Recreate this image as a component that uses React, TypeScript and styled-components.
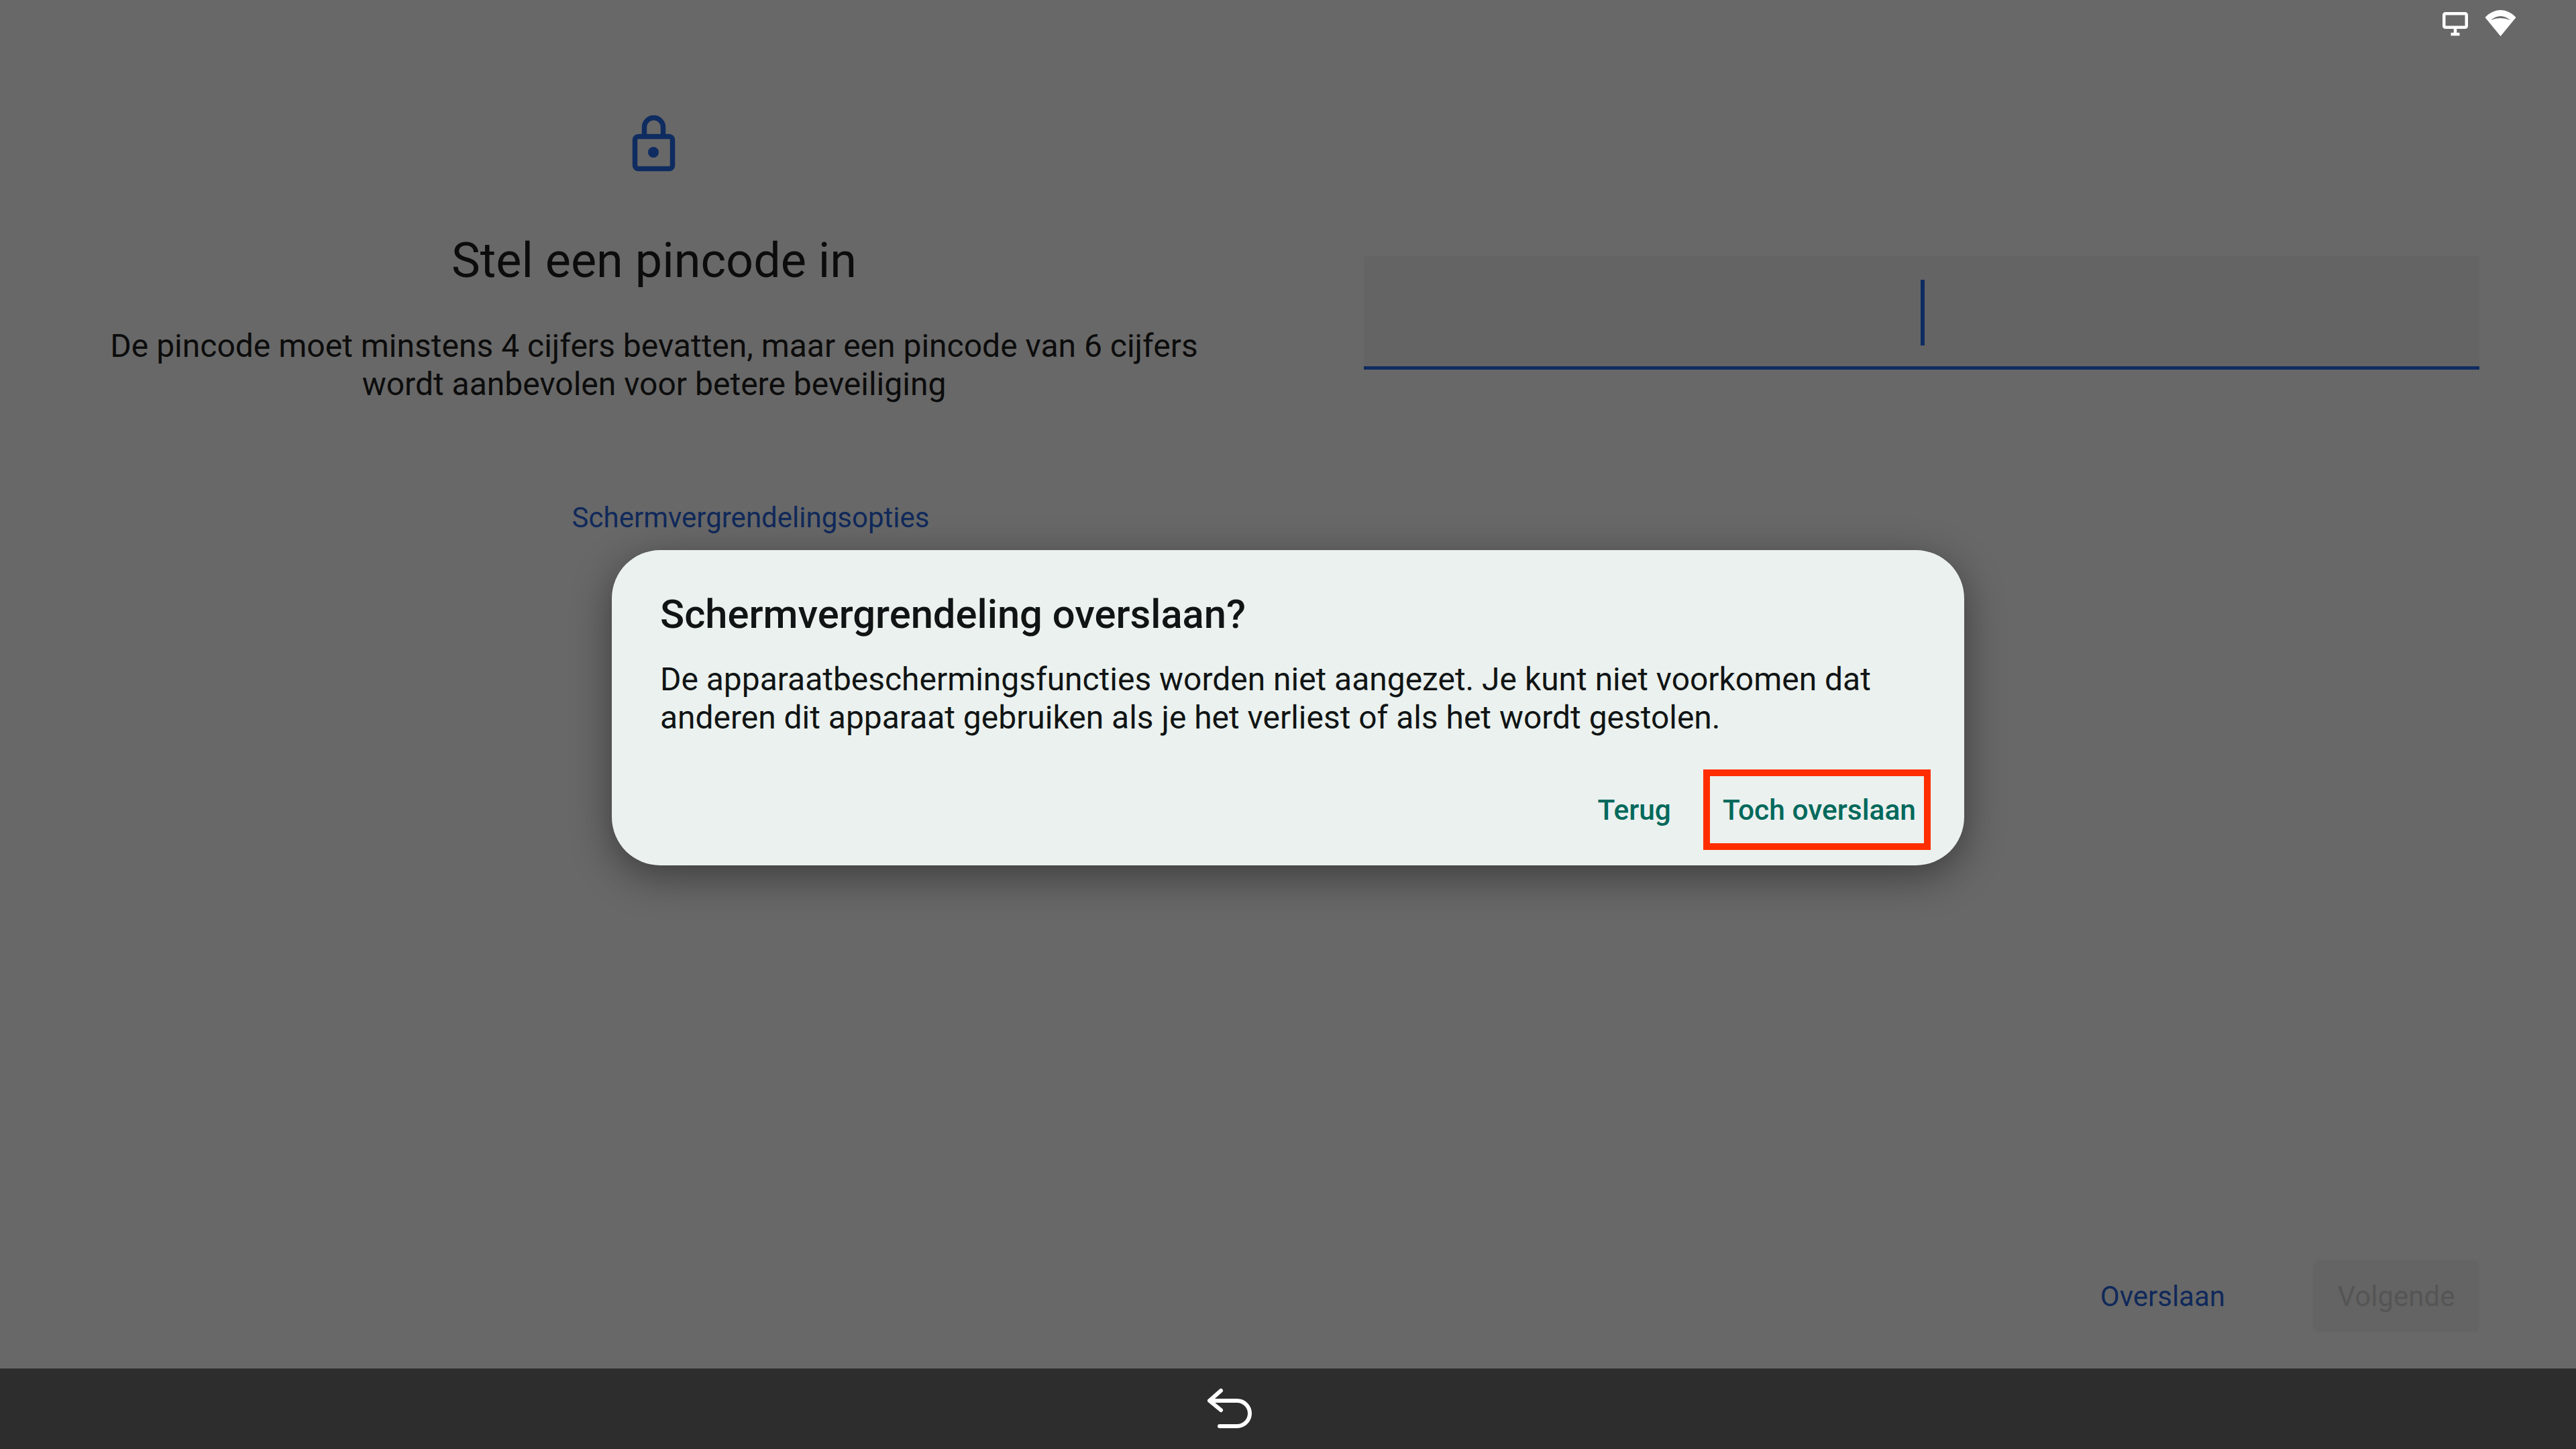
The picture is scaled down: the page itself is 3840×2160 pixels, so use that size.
import { createGlobalStyle, styled } from "styled-components";

const GlobalStyle = createGlobalStyle`
    html, body {
        margin: 0;
        padding: 0;
        background: #686868;
    }
    * {
        box-sizing: border-box;
    }
`;

export default function App() {
    return (
        <>
            <GlobalStyle />
            <Screen>
                <Main>
                    <StatusBar>
                        <svg width="42" height="40" viewBox="0 0 42 40" fill="none">
                            <rect x="4.250" y="5.250" width="33.500" height="20.500" rx="2" stroke="#fff" strokeWidth="4.500" />
                            <path d="M21 28v6M14.500 36h13" stroke="#fff" strokeWidth="4.500" />
                        </svg>
                        <svg width="47" height="40" viewBox="0 0 47 40">
                            <path d="M23.500 39 .5 11C7 4 15 0 23.500 0S40 4 46.500 11Z" fill="#fff" />
                            <path d="M9 15Q23.500 3 38 15 23.500 9 9 15Z" fill="#686868" />
                        </svg>
                    </StatusBar>
                    <Columns>
                        <LeftPane>
                            <LockIcon width="72" height="90" viewBox="0 0 72 90" fill="none">
                                <rect x="6.500" y="33.500" width="56" height="48" rx="5" stroke="#0f2c60" strokeWidth="7.500" />
                                <path d="M20.500 33V19.500a14 14 0 0 1 28 0V33" stroke="#0f2c60" strokeWidth="7.500" />
                                <circle cx="34" cy="57" r="8" fill="#0f2c60" />
                            </LockIcon>
                            <Title>Stel een pincode in</Title>
                            <Description>
                                De pincode moet minstens 4 cijfers bevatten, maar een pincode van 6 cijfers
                                <br />
                                wordt aanbevolen voor betere beveiliging
                            </Description>
                            <OptionsLink>Schermvergrendelingsopties</OptionsLink>
                        </LeftPane>
                        <RightPane>
                            <PinField>
                                <Caret />
                            </PinField>
                        </RightPane>
                    </Columns>
                    <Footer>
                        <SkipButton>Overslaan</SkipButton>
                        <NextButton>Volgende</NextButton>
                    </Footer>
                </Main>
                <NavBar>
                    <svg width="76" height="66" viewBox="0 0 76 66" fill="none">
                        <path
                            d="M24 5 7 20 24 34M7 20H48a19 19 0 0 1 0 38H22"
                            stroke="#fff"
                            strokeWidth="6"
                            strokeLinecap="round"
                            strokeLinejoin="round"
                        />
                    </svg>
                </NavBar>
                <Dialog>
                    <DialogTitle>Schermvergrendeling overslaan?</DialogTitle>
                    <DialogText>
                        De apparaatbeschermingsfuncties worden niet aangezet. Je kunt niet voorkomen dat
                        <br />
                        anderen dit apparaat gebruiken als je het verliest of als het wordt gestolen.
                    </DialogText>
                    <DialogActions>
                        <DialogButton>Terug</DialogButton>
                        <DialogButton $highlight>Toch overslaan</DialogButton>
                    </DialogActions>
                </Dialog>
            </Screen>
        </>
    );
}

const Screen = styled.div`
    position: relative;
    width: 3840px;
    height: 2160px;
    display: flex;
    flex-direction: column;
    overflow: hidden;
    background: #686868;
    font-family: Roboto, "Liberation Sans", sans-serif;
`;
const Main = styled.div`
    flex: 1;
    display: flex;
    flex-direction: column;
`;
const StatusBar = styled.div`
    height: 70px;
    padding: 15px 89px 0 0;
    display: flex;
    justify-content: flex-end;
    align-items: flex-start;
    gap: 23px;
`;
const Columns = styled.div`
    flex: 1;
    display: flex;
`;
const LeftPane = styled.div`
    width: 1950px;
    display: flex;
    flex-direction: column;
    align-items: center;
`;
const LockIcon = styled.svg`
    margin-top: 100px;
    margin-left: 2px;
`;
const Title = styled.h1`
    margin: 85px 0 0;
    font-size: 72px;
    line-height: 88px;
    font-weight: 400;
    color: #0c0c0c;
`;
const Description = styled.p`
    margin: 54px 0 0;
    font-size: 48px;
    line-height: 57px;
    text-align: center;
    color: #0c0c0c;
`;
const OptionsLink = styled.a`
    margin-top: 143px;
    margin-left: 288px;
    font-size: 42px;
    line-height: 56px;
    color: #10295a;
`;
const RightPane = styled.div`
    flex: 1;
    padding: 312px 144px 0 83px;
`;
const PinField = styled.div`
    height: 169px;
    padding: 4px 0 0 2px;
    display: flex;
    align-items: center;
    justify-content: center;
    background: #646464;
    border-bottom: 5px solid #0f2c60;
`;
const Caret = styled.div`
    width: 6px;
    height: 98px;
    background: #0f2c60;
`;
const Footer = styled.div`
    display: flex;
    justify-content: flex-end;
    align-items: center;
    gap: 131px;
    padding: 0 144px 54px 0;
`;
const SkipButton = styled.button`
    border: 0;
    padding: 0;
    background: none;
    font: inherit;
    font-size: 42px;
    color: #10295a;
`;
const NextButton = styled.button`
    width: 248px;
    height: 108px;
    border: 0;
    border-radius: 10px;
    background: #646464;
    font: inherit;
    font-size: 42px;
    color: #555;
`;
const NavBar = styled.div`
    height: 120px;
    flex-shrink: 0;
    padding: 28px 0 0 1796px;
    background: #2d2d2d;
`;
const Dialog = styled.div`
    position: absolute;
    left: 912px;
    top: 820px;
    width: 2016px;
    height: 470px;
    padding: 60px 50px 0 72px;
    border-radius: 72px;
    background: #ebf1ee;
    box-shadow: 0 16px 60px rgba(0, 0, 0, 0.42);
`;
const DialogTitle = styled.h2`
    margin: 0;
    font-size: 59.700px;
    line-height: 72px;
    font-weight: 500;
    color: #101414;
`;
const DialogText = styled.p`
    margin: 33px 0 0;
    font-size: 47.950px;
    line-height: 57px;
    color: #101414;
`;
const DialogActions = styled.div`
    margin-top: 48px;
    display: flex;
    justify-content: flex-end;
    align-items: center;
`;
const DialogButton = styled.button<{ $highlight?: boolean }>`
    height: 120px;
    padding: ${(p) => (p.$highlight ? "0 12px 0 19px" : "0 20px")};
    margin-left: ${(p) => (p.$highlight ? "28px" : "0")};
    border: ${(p) => (p.$highlight ? "10px solid #ff2d00" : "0")};
    background: none;
    font: inherit;
    font-size: 42.500px;
    font-weight: 500;
    color: #00695c;
`;
